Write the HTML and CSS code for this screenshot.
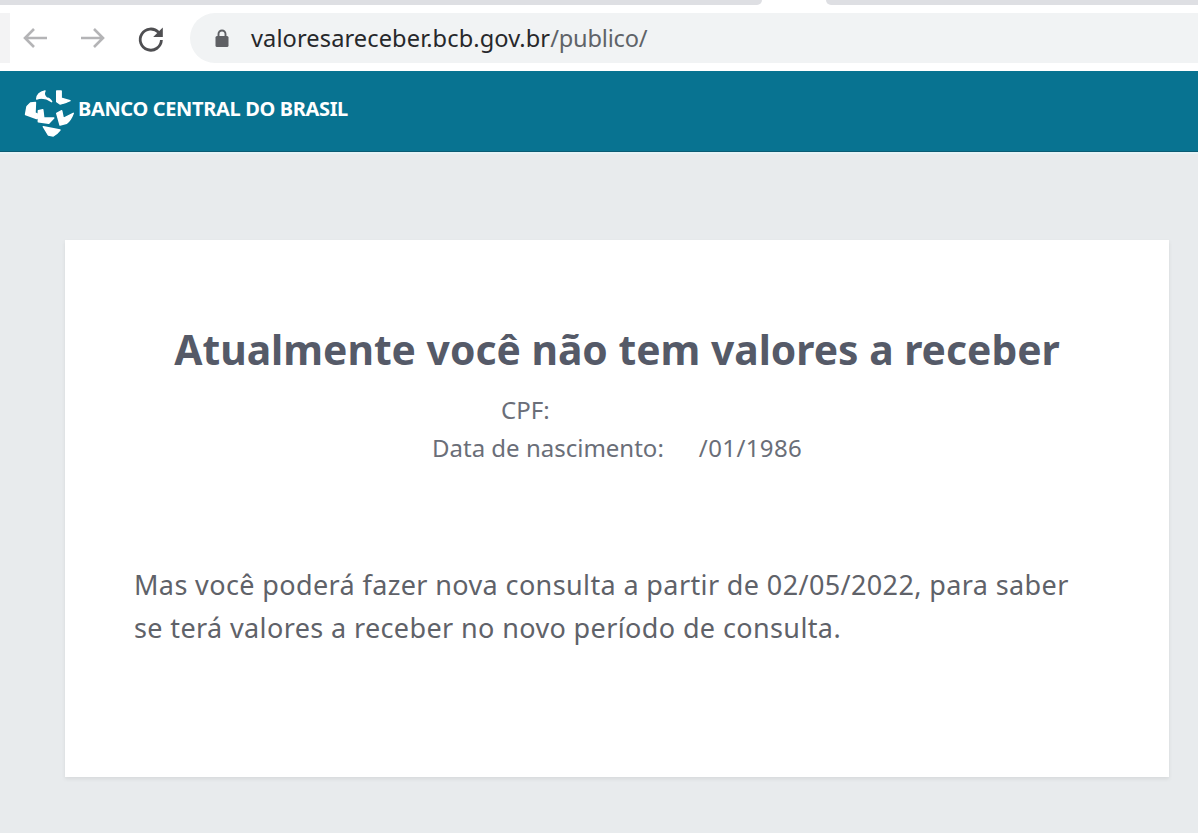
FILE: index.html
```html
<!DOCTYPE html>
<html lang="pt-BR">
<head>
    <meta charset="UTF-8">
    <meta name="viewport" content="width=device-width, initial-scale=1.0">
    <title>Valores a Receber - Banco Central do Brasil</title>
    <link rel="stylesheet" href="styles.css">
</head>
<body>

    <!-- Browser chrome -->
    <div class="tab-strip">
        <div class="tab-left"></div>
        <div class="tab-active"></div>
        <div class="tab-right"></div>
    </div>
    <div class="toolbar">
        <div class="edge-button"></div>
        <svg class="nav-icon nav-first" width="30" height="30" viewBox="0 0 30 30">
            <path d="M27 15H5M14 6l-9 9 9 9" fill="none" stroke="#b4b4b6" stroke-width="2.6"/>
        </svg>
        <svg class="nav-icon nav-next" width="30" height="30" viewBox="0 0 30 30">
            <path d="M3 15h22M16 6l9 9-9 9" fill="none" stroke="#b4b4b6" stroke-width="2.6"/>
        </svg>
        <svg class="nav-icon nav-reload" width="30" height="30" viewBox="0 0 30 30">
            <path d="M22.6 9.4A10.6 10.6 0 1 0 25.4 17" fill="none" stroke="#4f4f52" stroke-width="2.8"/>
            <path d="M26.8 4.5v9.6h-9.6z" fill="#4f4f52"/>
        </svg>
        <div class="url-bar">
            <svg class="lock" width="16" height="20" viewBox="0 0 16 20">
                <path d="M4.5 9V6a3.5 3.5 0 0 1 7 0v3" fill="none" stroke="#5f6064" stroke-width="1.9"/>
                <rect x="1.5" y="8" width="13" height="11" rx="1.5" fill="#5f6064"/>
            </svg>
            <span class="url-host">valoresareceber.bcb.gov.br</span><span class="url-path">/publico/</span>
        </div>
    </div>

    <!-- Header -->
    <header class="site-header">
        <svg class="logo" width="52" height="50" viewBox="0 0 52 50" fill="#fff" stroke="#fff" stroke-width="1.4" stroke-linejoin="round">
            <path d="M21 3C16 4 13 7 12.700 11 17 9.500 23 10.500 27.700 13.700 26 11 24 10 22.700 10 20 8 20 5 21 3z"/>
            <path d="M32.700 3h4.500v7.300l8.800 2.400c-3 1.500-6 2.500-10 3.300l-3.300-2.300z"/>
            <path d="M6.500 15l5-.5-.5 10.500 6.500 3-5 2.500-11-4 1.500-8z"/>
            <path d="M14.300 22.700l4.500-1 1 8.300h10l-5 5.300-10.500-1.600z"/>
            <path d="M32.700 25.300l5-2.600 1.600 7.600 10-5c-1.500 4-3.500 7.500-6.600 10L36 37z"/>
            <path d="M19.300 38.700L36 42c-2 2.500-4 4.500-6.700 6l-5-1z"/>
        </svg>
        <span class="brand">BANCO CENTRAL DO BRASIL</span>
    </header>

    <!-- Result -->
    <main class="page">
        <section class="card">
            <h1>Atualmente você não tem valores a receber</h1>
            <div class="person">
                <div class="person-row row-cpf"><span>CPF:</span></div>
                <div class="person-row row-birth"><span>Data de nascimento:</span><span class="birth-date">/01/1986</span></div>
            </div>
            <p class="notice">Mas você poderá fazer nova consulta a partir de 02/05/2022, para saber<br>se terá valores a receber no novo período de consulta.</p>
        </section>
    </main>

</body>
</html>
```

FILE: styles.css
```css
* {
    margin: 0;
    padding: 0;
    box-sizing: border-box;
}

html, body {
    height: 100%;
}

body {
    font-family: 'Noto Sans', sans-serif;
    background-color: #ffffff;
    width: 1198px;
    height: 833px;
    overflow: hidden;
    display: flex;
    flex-direction: column;
}

/* Browser chrome */
.tab-strip {
    display: flex;
    height: 5px;
    background-color: #ffffff;
    flex-shrink: 0;
}

.tab-left {
    width: 762px;
    background-color: #dedfe3;
    border-bottom-right-radius: 8px;
}

.tab-active {
    width: 64px;
}

.tab-right {
    flex: 1;
    background-color: #dedfe3;
    border-bottom-left-radius: 8px;
}

.toolbar {
    display: flex;
    align-items: center;
    height: 66px;
    flex-shrink: 0;
}

.edge-button {
    width: 10px;
    height: 50px;
    background-color: #f3f3f4;
}

.nav-icon {
    flex-shrink: 0;
}

.nav-first {
    margin-left: 10px;
}

.nav-next {
    margin-left: 28px;
}

.nav-reload {
    margin-left: 28px;
}

.url-bar {
    flex: 1;
    display: flex;
    align-items: center;
    height: 50px;
    margin-left: 24px;
    padding-left: 24px;
    background-color: #f1f3f4;
    border-radius: 25px 0 0 25px;
    font-size: 23.6px;
    letter-spacing: 0.1px;
}

.lock {
    margin-right: 21px;
}

.url-host {
    color: #27282b;
}

.url-path {
    color: #5f6368;
    letter-spacing: -0.2px;
}

/* Header */
.site-header {
    display: flex;
    align-items: center;
    height: 81px;
    flex-shrink: 0;
    padding-left: 24px;
    background-color: #087391;
    border-bottom: 1px solid #0a5c74;
}

.logo {
    flex-shrink: 0;
    margin-top: 4px;
}

.brand {
    margin-left: 2px;
    margin-top: -6px;
    color: #ffffff;
    font-size: 20px;
    font-weight: 700;
    letter-spacing: -0.35px;
}

/* Page */
.page {
    flex: 1;
    padding: 86px 29px 55px 65px;
    background-color: #e8ebed;
    border-top: 2px solid #e6f3f6;
}

.card {
    height: 537px;
    padding-top: 79px;
    background-color: #ffffff;
    box-shadow: 0 2px 4px rgba(0, 0, 0, 0.08);
}

.card h1 {
    text-align: center;
    color: #555a68;
    font-size: 40.8px;
    line-height: 60px;
    font-weight: 700;
}

.person {
    margin-top: 11px;
    color: #6a6e78;
    font-size: 24px;
}

.person-row {
    display: flex;
    height: 38px;
    align-items: center;
}

.row-cpf {
    padding-left: 436px;
}

.row-birth {
    padding-left: 367px;
}

.birth-date {
    margin-left: 35px;
    letter-spacing: 0.4px;
}

.notice {
    margin-top: 97px;
    padding-left: 69px;
    color: #5f6269;
    font-size: 27px;
    letter-spacing: 0.38px;
    line-height: 43px;
}
```
